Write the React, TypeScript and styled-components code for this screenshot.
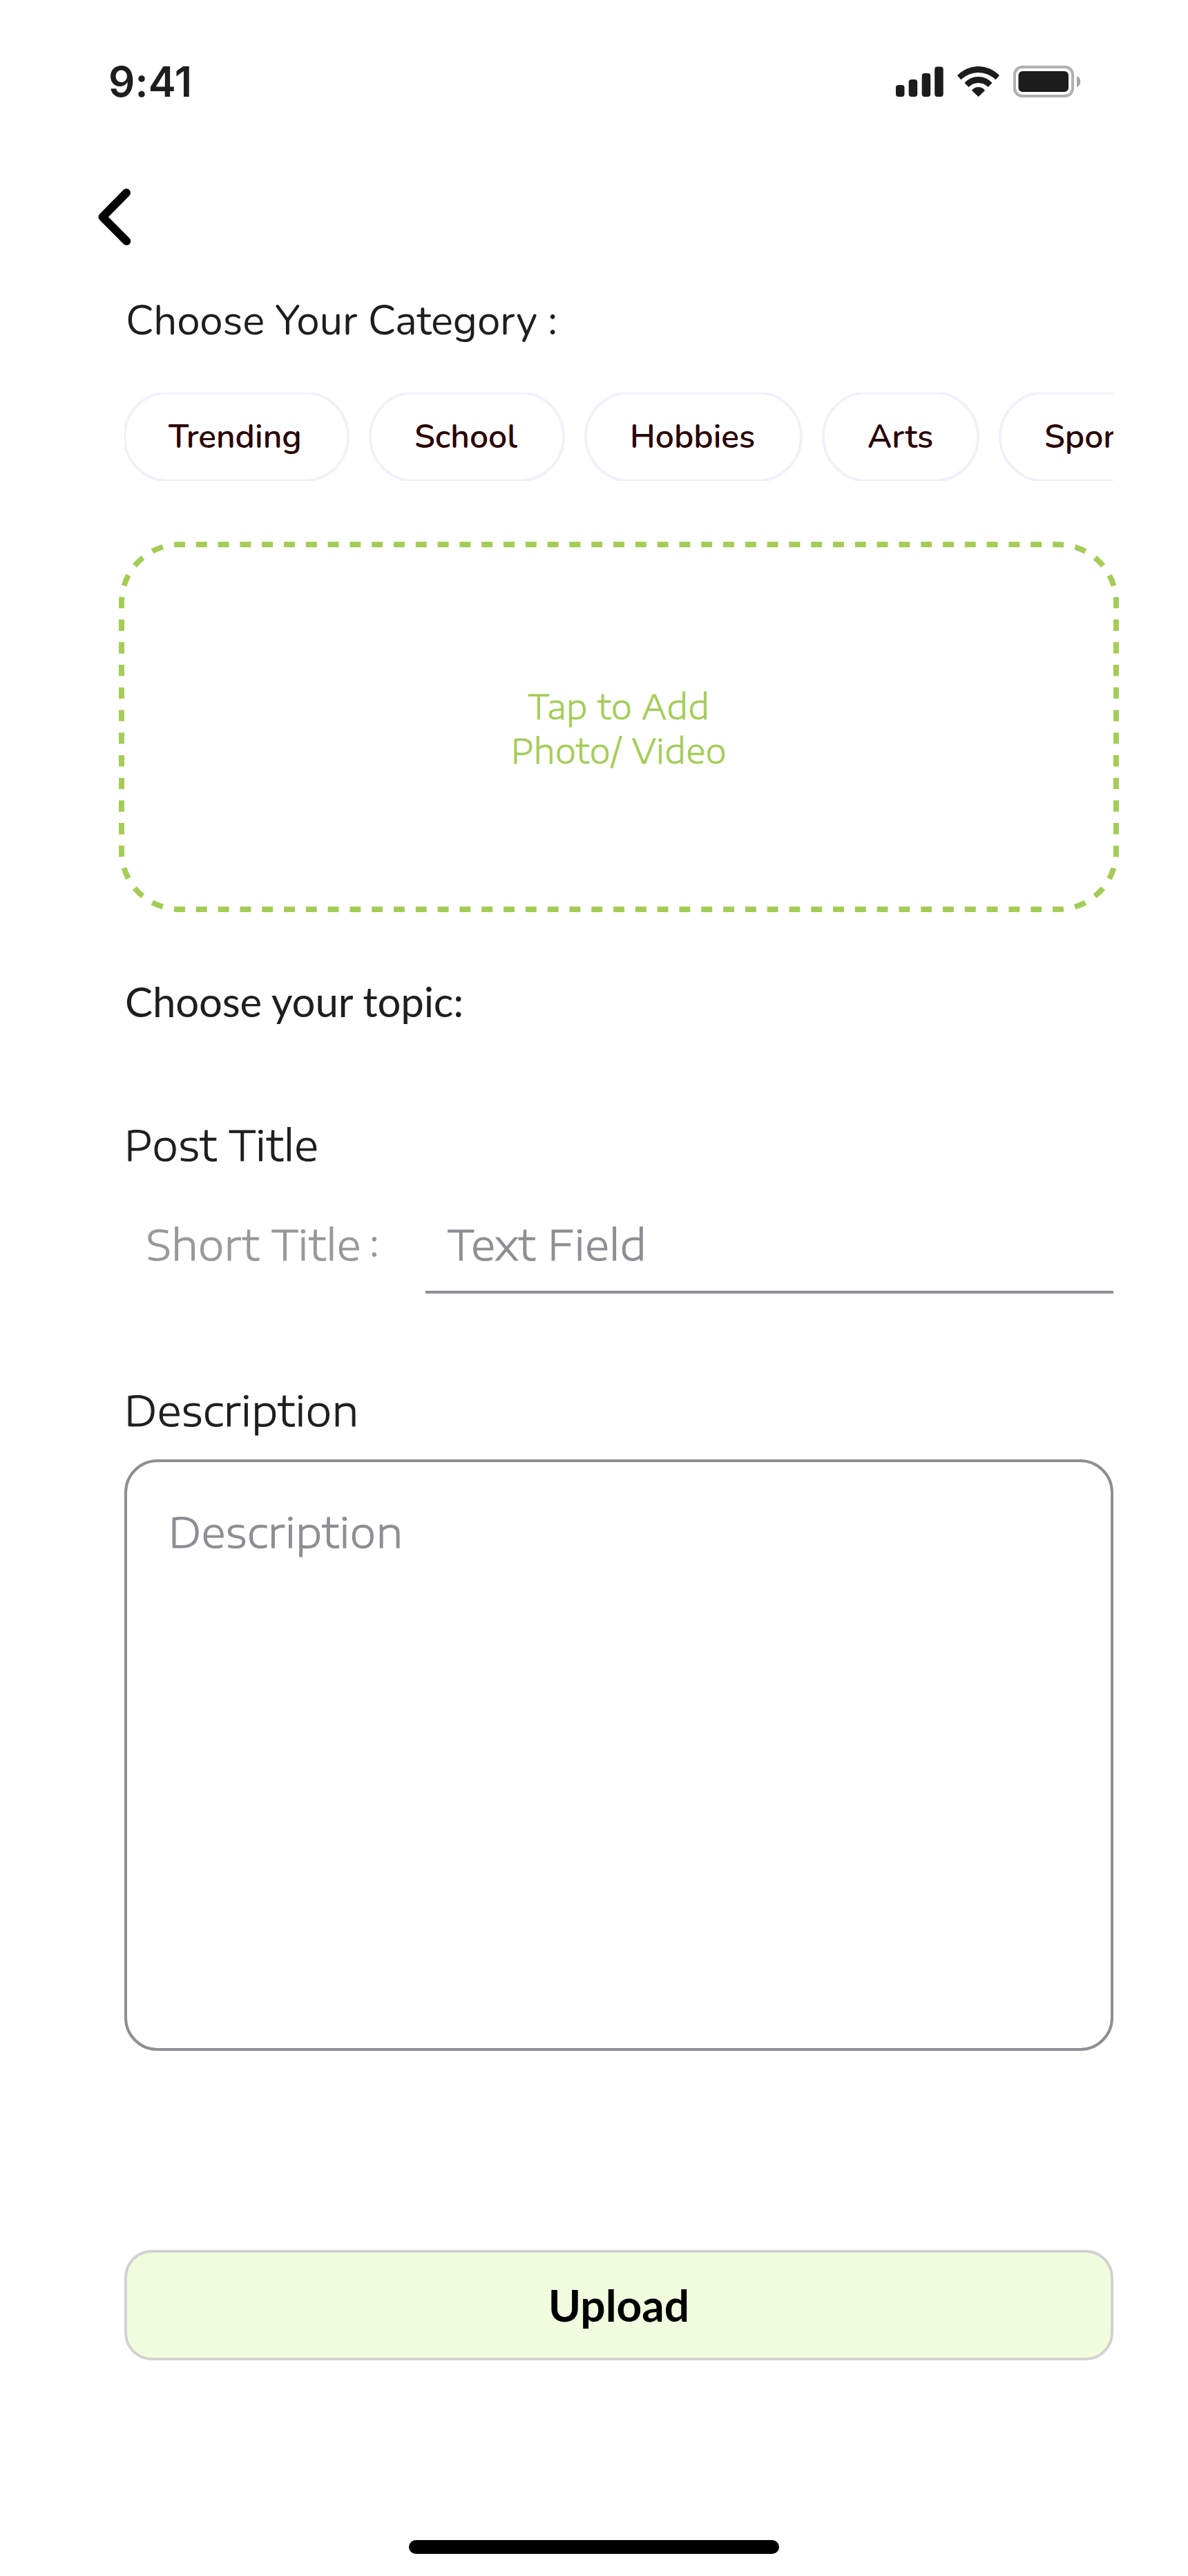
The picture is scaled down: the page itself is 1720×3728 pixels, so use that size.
import React from "react";
import styled, { createGlobalStyle, css } from "styled-components";

const INK = "#1e1e1e";
const MUTED = "#8e8e93";
const GREEN = "#a4cc57";
const NUNITO = `Nunito, "Open Sans", sans-serif`;
const LATO = `Lato, "Open Sans", sans-serif`;
const ENCODE = `"Encode Sans Expanded", "Encode Sans", "Noto Sans", sans-serif`;

const bodyText = css`
  font: 300 60px/75px ${ENCODE};
  letter-spacing: 0.6px;
  -webkit-text-stroke: 1.1px currentColor;
`;

const GlobalStyle = createGlobalStyle`
  * { box-sizing: border-box; }
  body { margin: 0; background: #fff; }
`;

const Screen = styled.div`
  width: 1720px;
  height: 3728px;
  display: flex;
  flex-direction: column;
  background: #fff;
  color: ${INK};
  overflow: hidden;
`;

const StatusBar = styled.header`
  height: 236px;
  padding: 0 155px 0 157px;
  display: flex;
  justify-content: space-between;
  align-items: center;
`;

const Clock = styled.time`
  font: 600 60px/72px Inter, sans-serif;
  letter-spacing: 0.1px;
`;

const StatusIcons = styled.div`
  display: flex;
  align-items: center;
  gap: 20px;
`;

const BackButton = styled.button`
  align-self: flex-start;
  width: 60px;
  height: 92px;
  margin: 32px 0 0 136px;
  padding: 0;
  border: 0;
  background: none;
  svg { display: block; }
`;

const Content = styled.main`
  width: 1432px;
  margin-left: 180px;
  display: flex;
  flex-direction: column;
`;

const CategoryHeading = styled.h2`
  margin: 63px 0 0 2px;
  font: 400 60px/82px ${NUNITO};
  letter-spacing: -0.15px;
`;

const ChipRow = styled.div`
  height: 128px;
  margin-top: 63px;
  display: flex;
  align-items: center;
  gap: 28px;
  overflow: hidden;
`;

const Chip = styled.button<{ $width: number }>`
  flex: none;
  width: ${p => p.$width}px;
  height: 132px;
  padding: 0 0 0 62px;
  border: 4px solid #f1f0fb;
  border-radius: 66px;
  background: #fff;
  color: #2a0404;
  font: 600 48px/66px ${NUNITO};
  text-align: left;
  &:first-child { margin-left: -2px; }
`;

const UploadArea = styled.button`
  position: relative;
  width: 1448px;
  height: 536px;
  margin: 88px 0 0 -8px;
  padding: 4px 0 0;
  border: 0;
  background: none;
  color: ${GREEN};
  ${bodyText}
  font-size: 48px;
  line-height: 64px;
  -webkit-text-stroke-width: 0.8px;
`;

const Outline = styled.svg`
  position: absolute;
  inset: 0;
`;

const TopicHeading = styled.h2`
  margin: 93px 0 0 1px;
  font: 400 60px/72px ${LATO};
  letter-spacing: -0.2px;
`;

const FieldLabel = styled.h3<{ $gap: number }>`
  margin: ${p => p.$gap}px 0 0;
  ${bodyText}
`;

const TitleRow = styled.div`
  height: 179px;
  display: flex;
  justify-content: space-between;
  align-items: stretch;
`;

const ShortTitle = styled.div`
  display: flex;
  gap: 12px;
  padding: 69px 0 0 32px;
  color: #999;
  ${bodyText}
`;

const Colon = styled.span`
  font: 400 60px/75px ${NUNITO};
  -webkit-text-stroke: 0;
`;

const TextField = styled.div`
  width: 996px;
  padding: 69px 0 0 32px;
  border-bottom: 4px solid ${MUTED};
  color: ${MUTED};
  ${bodyText}
`;

const TextArea = styled.div`
  height: 856px;
  margin-top: 35px;
  padding: 62px 60px;
  border: 4px solid ${MUTED};
  border-radius: 48px;
  color: ${MUTED};
  ${bodyText}
`;

const SubmitButton = styled.button`
  height: 160px;
  margin-top: 288px;
  padding: 0 0 1px;
  border: 4px solid #d1d1d1;
  border-radius: 40px;
  background: #f1fcde;
  color: #000;
  font: 700 64px/76px ${LATO};
`;

const HomeIndicator = styled.div`
  width: 536px;
  height: 20px;
  margin: auto auto 32px;
  border-radius: 10px;
  background: #000;
`;

const SignalIcon = () => (
  <svg width="69" height="44" fill="#1c1c1c">
    <rect x="0" y="27" width="12.5" height="17" rx="4" />
    <rect x="18.7" y="19" width="12.5" height="25" rx="4" />
    <rect x="37.7" y="10" width="12.5" height="34" rx="4" />
    <rect x="56.2" y="0.5" width="12.5" height="43.5" rx="4" />
  </svg>
);

const WifiIcon = () => (
  <svg width="61" height="44" viewBox="0 0 183 132" fill="#1c1c1c">
    <path d="M0 40A124.6 124.6 0 0 1 183 40L167 58A107 107 0 0 0 16 58Z" />
    <path d="M31 72A80 80 0 0 1 151.500 72L133.500 90A58 58 0 0 0 49.500 90Z" />
    <path d="M63 105A34.600 34.600 0 0 1 120 105L91.500 132Z" />
  </svg>
);

const BatteryIcon = () => (
  <svg width="98" height="46">
    <rect x="2" y="2" width="84" height="42" rx="11" fill="none" stroke="#b0b0b0" strokeWidth="4" />
    <rect x="7.500" y="8" width="72.500" height="30" rx="6" fill="#1c1c1c" />
    <path d="M92 15C99 18 99 28 92 31Z" fill="#a4a4a4" />
  </svg>
);

/* Each side and corner carries a whole number of evenly spaced dashes. */
const CORNER = (84 * Math.PI) / 2 / 4;
const EDGES: [string, number][] = [
  ["M88 4H1360", 1272 / 40],
  ["M1360 4A84 84 0 0 1 1444 88", CORNER],
  ["M1444 88V448", 360 / 11],
  ["M1444 448A84 84 0 0 1 1360 532", CORNER],
  ["M1360 532H88", 1272 / 40],
  ["M88 532A84 84 0 0 1 4 448", CORNER],
  ["M4 448V88", 360 / 11],
  ["M4 88A84 84 0 0 1 88 4", CORNER],
];

const CATEGORIES = [
  { name: "Trending", width: 328 },
  { name: "School", width: 284 },
  { name: "Hobbies", width: 316 },
  { name: "Arts", width: 228 },
  { name: "Sports", width: 272 },
];

export default function App() {
  return (
    <Screen>
      <GlobalStyle />
      <StatusBar>
        <Clock>9:41</Clock>
        <StatusIcons>
          <SignalIcon />
          <WifiIcon />
          <BatteryIcon />
        </StatusIcons>
      </StatusBar>
      <BackButton aria-label="Back">
        <svg width="60" height="92" fill="none" stroke="#000" strokeWidth="12" strokeLinecap="round" strokeLinejoin="round">
          <path d="M47 11L12.500 46L47.300 81" />
        </svg>
      </BackButton>
      <Content>
        <CategoryHeading>Choose Your Category :</CategoryHeading>
        <ChipRow>
          {CATEGORIES.map(c => (
            <Chip key={c.name} $width={c.width}>{c.name}</Chip>
          ))}
        </ChipRow>
        <UploadArea>
          <Outline width="1448" height="536" fill="none" stroke={GREEN} strokeWidth="8">
            {EDGES.map(([d, period]) => (
              <path key={d} d={d} strokeDasharray={period / 2} strokeDashoffset={period / 4} />
            ))}
          </Outline>
          Tap to Add
          <br />
          Photo/ Video
        </UploadArea>
        <TopicHeading>Choose your topic:</TopicHeading>
        <FieldLabel $gap={133}>Post Title</FieldLabel>
        <TitleRow>
          <ShortTitle>
            Short Title<Colon>:</Colon>
          </ShortTitle>
          <TextField>Text Field</TextField>
        </TitleRow>
        <FieldLabel $gap={130}>Description</FieldLabel>
        <TextArea>Description</TextArea>
        <SubmitButton>Upload</SubmitButton>
      </Content>
      <HomeIndicator />
    </Screen>
  );
}
